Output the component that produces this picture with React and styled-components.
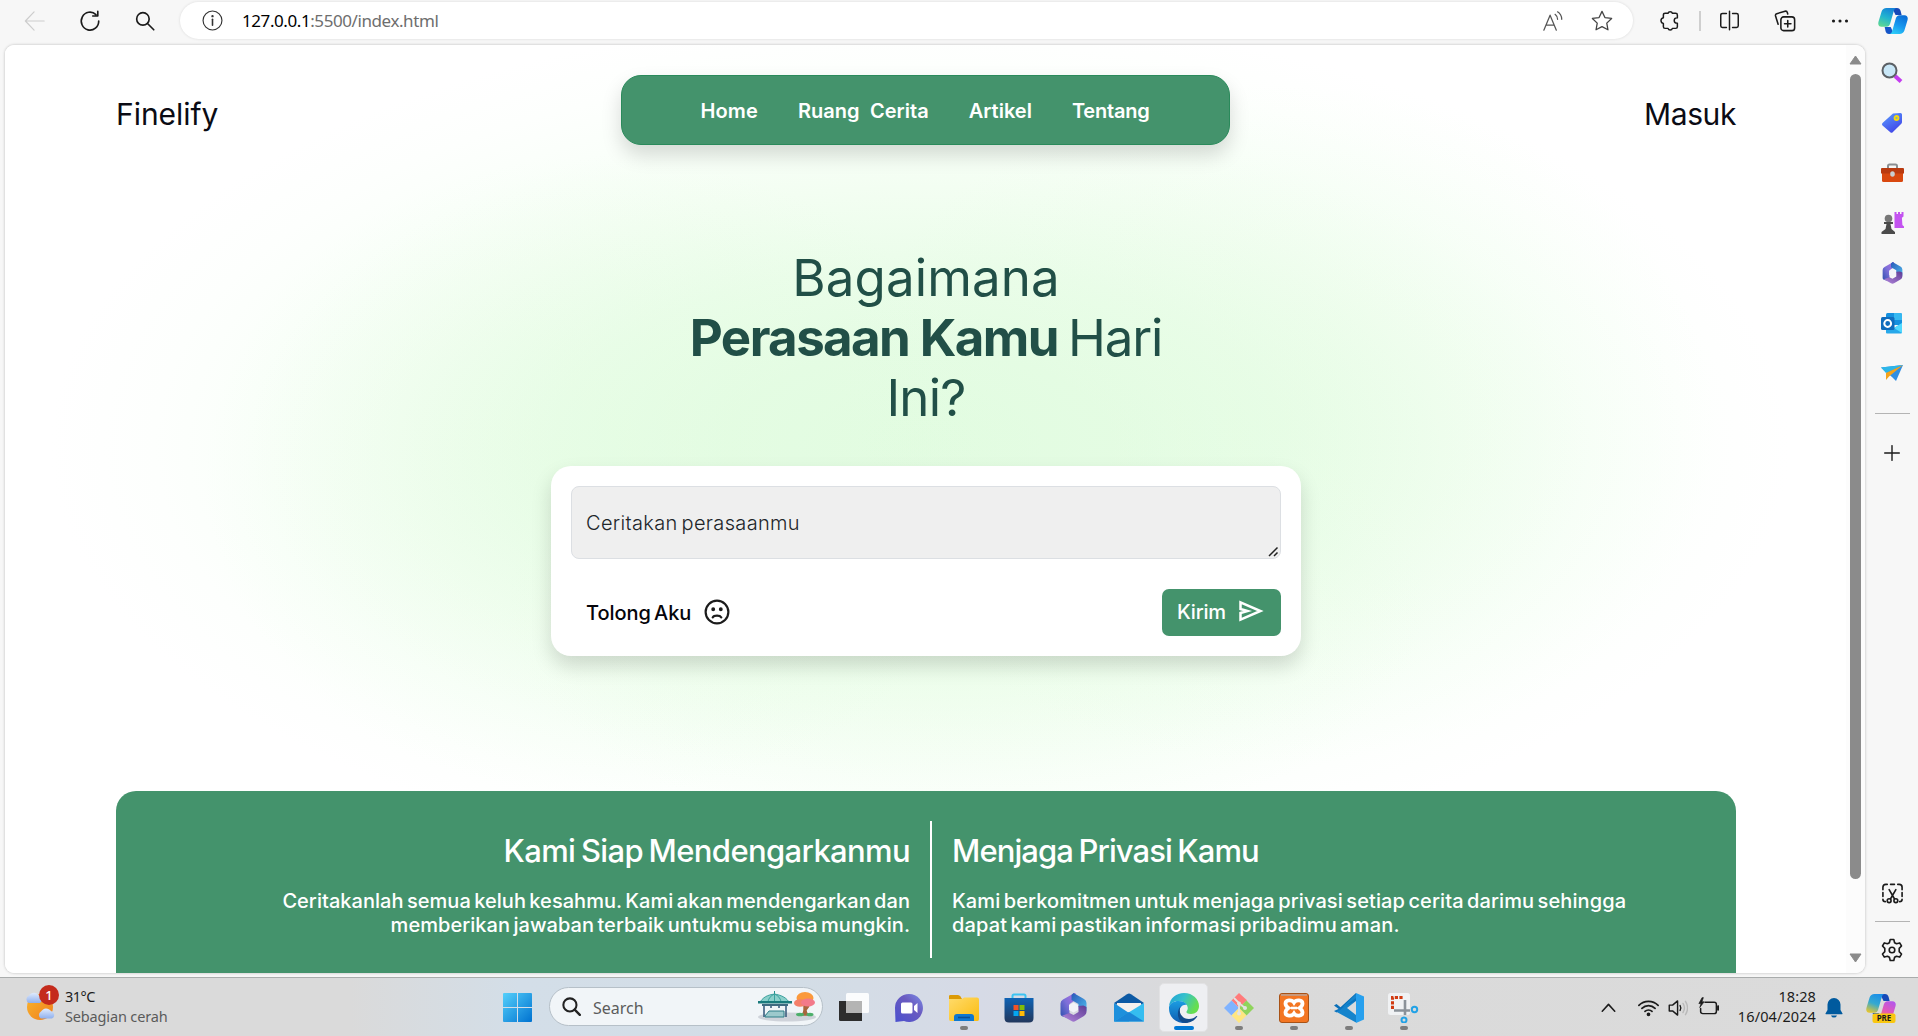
import React from "react";
import styled, { createGlobalStyle } from "styled-components";

const ui = '"Noto Sans", "Open Sans", sans-serif';
const brand = 'Inter, "Open Sans", sans-serif';

const Global = createGlobalStyle`
  * { box-sizing: border-box; }
  body { margin: 0; background: #f7f7f7; overflow: hidden; }
  svg { display: block; flex: none; }
`;

/* ---------- shell ---------- */
const Screen = styled.div`
  display: flex;
  flex-direction: column;
  width: 1918px;
  height: 1036px;
  background: #f7f7f7;
  overflow: hidden;
`;
const Toolbar = styled.header`
  display: flex;
  align-items: center;
  height: 45px;
  padding: 0 0 4px 7px;
  flex: none;
`;
const Slot = styled.div`
  width: ${(p) => p.$w || 55}px;
  display: flex;
  align-items: center;
  justify-content: center;
  flex: none;
`;
const AddressBar = styled.div`
  display: flex;
  align-items: center;
  width: 1453px;
  height: 37px;
  margin: 0 9px 0 8px;
  padding: 0 20px 0 22px;
  border-radius: 19px;
  background: #fff;
  box-shadow: 0 0 3px rgba(0, 0, 0, 0.12);
`;
const Url = styled.span`
  margin-left: 19px;
  flex: 1;
  font: 400 17px/24px ${ui};
  letter-spacing: -0.42px;
  color: #6e6e6e;
  b { font-weight: 400; color: #000; }
`;
const AddressIcons = styled.div`
  display: flex;
  gap: 28px;
  align-items: center;
`;
const ToolDivider = styled.div`
  width: 2px;
  height: 20px;
  margin: 0 0 0 3px;
  background: #cfcfcf;
`;
const Body = styled.div`
  display: flex;
  flex: none;
  height: 932px;
  padding-left: 5px;
`;
const Viewport = styled.main`
  display: flex;
  width: 1860px;
  height: 928px;
  border-radius: 9px;
  overflow: hidden;
  background: #fff;
  box-shadow: 0 0 3px rgba(0, 0, 0, 0.25);
`;
const Page = styled.div`
  width: 1841px;
  padding: 30px 110px 0 111px;
  overflow: hidden;
  background:
    radial-gradient(ellipse 400px 320px at 600px 430px, rgba(224, 252, 222, 0.45), rgba(240, 255, 240, 0) 100%),
    radial-gradient(ellipse 440px 340px at 1270px 380px, rgba(224, 252, 222, 0.4), rgba(240, 255, 240, 0) 100%),
    radial-gradient(ellipse 460px 240px at 960px 560px, rgba(228, 253, 226, 0.4), rgba(240, 255, 240, 0) 100%),
    radial-gradient(ellipse 870px 430px at 915px 400px,
      #e2fce1 0%, #e5fce4 22%, #ebfdea 42%, #f3fef2 60%, #fafffa 77%, #fdfffd 88%, #ffffff 100%);
`;
const ScrollTrack = styled.div`
  width: 19px;
  display: flex;
  flex-direction: column;
  align-items: center;
  padding: 10px 0;
  background: #fcfcfc;
`;
const ScrollThumb = styled.div`
  width: 11px;
  height: 805px;
  margin: 9px 0 auto;
  border-radius: 6px;
  background: #8b8b8b;
`;

/* ---------- site ---------- */
const SiteHeader = styled.div`
  display: flex;
  justify-content: space-between;
  height: 70px;
`;
const HeaderLink = styled.a`
  width: ${(p) => p.$w}px;
  text-align: ${(p) => p.$align};
  font: 400 30px/40px ${brand};
  letter-spacing: ${(p) => p.$ls}px;
  padding-top: 19px;
  color: #0b0b14;
`;
const Nav = styled.nav`
  width: 609px;
  height: 70px;
  display: flex;
  align-items: center;
  justify-content: center;
  gap: 40px;
  border-radius: 20px;
  background: #44936c;
  border: 1px solid #2a8a5b;
  box-shadow: 0 10px 20px rgba(0, 0, 0, 0.15);
`;
const NavLink = styled.a`
  font: 600 20px/24px ${brand};
  letter-spacing: ${(p) => p.$ls}px;
  padding-top: 2px;
  color: #fff;
  white-space: pre;
`;
const Question = styled.h1`
  width: 520px;
  margin: 103px auto 38px;
  text-align: center;
  font: 400 51px/60px ${brand};
  color: #214f47;
  b { font-weight: 700; letter-spacing: -1.6px; }
`;
const Phrase = styled.span`
  letter-spacing: ${(p) => p.$ls}px;
  word-spacing: -3px;
`;
const FeelingCard = styled.section`
  width: 750px;
  height: 190px;
  margin: 0 auto;
  padding: 20px;
  border-radius: 20px;
  background: #fff;
  box-shadow: 0 10px 20px rgba(0, 0, 0, 0.15);
`;
const FeelingField = styled.div`
  display: flex;
  align-items: flex-end;
  height: 73px;
  padding: 0 1px 1px 14px;
  border: 1px solid #dcdfe3;
  border-radius: 8px;
  background: #efefef;
`;
const FieldText = styled.span`
  flex: 1;
  align-self: center;
  padding-top: 1px;
  font: 300 20px/30px ${brand};
  letter-spacing: 0.33px;
  word-spacing: -2px;
  color: #212529;
`;
const CardActions = styled.div`
  display: flex;
  justify-content: space-between;
  align-items: center;
  height: 47px;
  margin-top: 30px;
  padding-left: 15px;
`;
const HelpLink = styled.a`
  display: flex;
  align-items: center;
  gap: 13px;
  font: 500 20px/28px ${brand};
  letter-spacing: -0.05px;
  word-spacing: -2px;
  color: #05050a;
  svg { margin-bottom: 2px; }
`;
const SendButton = styled.button`
  display: flex;
  align-items: center;
  justify-content: space-between;
  width: 119px;
  height: 47px;
  padding: 0 17px 2px 15px;
  border: 0;
  border-radius: 7px;
  background: #44936c;
  color: #fff;
  font: 500 20px/28px ${brand};
  letter-spacing: -0.2px;
  svg { margin-bottom: 1px; }
`;
const Promises = styled.section`
  display: flex;
  justify-content: center;
  height: 210px;
  margin-top: 135px;
  padding-top: 30px;
  border-radius: 20px 20px 0 0;
  background: #44936c;
`;
const Promise_ = styled.article`
  width: ${(p) => p.$w}px;
  height: 137px;
  padding: ${(p) => (p.$side === "right" ? "11px 20px 0 0" : "11px 0 0 20px")};
  text-align: ${(p) => p.$side};
  color: #fff;
  border-right: ${(p) => (p.$side === "right" ? "2px solid #fff" : "0")};
`;
const PromiseTitle = styled.h2`
  margin: 0 0 19px;
  font: 500 31px/38px ${brand};
  letter-spacing: ${(p) => p.$ls}px;
  word-spacing: -2px;
`;
const PromiseText = styled.p`
  margin: 0;
  font: 500 20px/24px ${brand};
  letter-spacing: ${(p) => p.$ls}px;
  word-spacing: -2px;
  white-space: nowrap;
`;

/* ---------- sidebar ---------- */
const Sidebar = styled.aside`
  display: flex;
  flex-direction: column;
  align-items: center;
  width: 53px;
  padding: 3px 0 0 1px;
`;
const SideSlot = styled.div`
  height: ${(p) => p.$h || 50}px;
  margin-top: ${(p) => (p.$push ? "auto" : 0)};
  display: flex;
  align-items: center;
  flex: none;
`;
const SideRule = styled.div`
  width: 35px;
  height: 1px;
  flex: none;
  background: #b4b4b4;
  margin-top: ${(p) => p.$top || 0}px;
`;

/* ---------- taskbar ---------- */
const Taskbar = styled.footer`
  display: flex;
  height: 59px;
  flex: none;
  border-top: 1px solid #a9acac;
  background: linear-gradient(90deg, #dadada 0, #dadada 350px, #d3dee8 520px, #d3dde6 800px, #d6dae6 980px, #dadada 1200px, #dbdbdb 100%);
`;
const Weather = styled.div`
  display: flex;
  width: 490px;
  padding: 8px 0 0 25px;
`;
const WeatherIcon = styled.div`
  position: relative;
  width: 40px;
`;
const Badge = styled.span`
  position: absolute;
  left: 14px;
  top: -1px;
  width: 20px;
  height: 20px;
  border-radius: 50%;
  background: #c42b1c;
  color: #fff;
  text-align: center;
  font: 500 13px/20px ${ui};
`;
const Stack = styled.div`
  display: flex;
  flex-direction: column;
  text-align: ${(p) => p.$align || "left"};
  font: 400 14.5px/20px ${ui};
  color: ${(p) => p.$color || "#5a5a5a"};
  letter-spacing: ${(p) => p.$ls || 0}px;
  b { font-weight: 400; color: #1c1c1c; letter-spacing: -0.5px; }
`;
const SearchPill = styled.div`
  display: flex;
  align-items: center;
  width: 274px;
  height: 39px;
  margin: 9px 3px 0 4px;
  padding: 0 5px 0 12px;
  border: 1px solid #b6c0c8;
  border-radius: 20px;
  background: #f1f5f8;
`;
const SearchLabel = styled.span`
  flex: 1;
  margin-left: 12px;
  padding-top: 2px;
  font: 400 16px/22px ${ui};
  letter-spacing: 0;
  color: #5c5c5c;
`;
const AppButton = styled.div`
  display: flex;
  flex-direction: column;
  align-items: center;
  justify-content: space-between;
  width: 49px;
  height: 49px;
  margin: 5px 3px 0;
  padding: 9px 0 1px;
  border-radius: 5px;
  border: 1px solid ${(p) => (p.$active ? "#e2e2e4" : "transparent")};
  background: ${(p) => (p.$active ? "#eeeff2" : "transparent")};
`;
const Running = styled.i`
  width: ${(p) => (p.$state === "active" ? 20 : 8)}px;
  height: 4px;
  border-radius: 2px;
  background: ${(p) => (p.$state === "active" ? "#0078d4" : p.$state ? "#7d7d7d" : "transparent")};
`;
const Tray = styled.div`
  display: flex;
  align-items: center;
  margin-left: auto;
  width: 324px;
  padding-top: 1px;
`;
const Clock = styled.div`
  flex: none;
  width: 82px;
  margin: 0 9px 4px 0;
`;

/* ---------- icons ---------- */
const Line = ({ size = 24, w = 1.6, color = "#1b1b1b", children, box = 24 }) => (
  <svg width={size} height={size} viewBox={`0 0 ${box} ${box}`} fill="none" stroke={color} strokeWidth={w} strokeLinecap="round" strokeLinejoin="round">{children}</svg>
);
const Gear = () => (
  <Line size={24} w={1.6}>
    <circle cx="12" cy="12" r="2.8" />
    <path d="M10.2 1.500h3.600l.8 3.200 1.900 1.100 3.200-.9 1.800 3.100-2.300 2.400v3.200l2.300 2.400-1.800 3.100-3.200-.9-1.900 1.100-.8 3.200h-3.600l-.8-3.200-1.900-1.100-3.200.9L2.500 16l2.300-2.400v-3.200L2.500 8l1.800-3.100 3.200.9 1.900-1.100z" />
  </Line>
);
const Copilot = ({ id, pre }) => (
  <svg width="30" height={pre ? 30 : 28} viewBox={pre ? "0 0 30 30" : "0 0 30 28"}>
    <defs>
      <linearGradient id={id + "a"} x1="0.6" y1="0" x2="0.2" y2="1">
        <stop offset="0" stopColor={pre ? "#1b8fe8" : "#1583d8"} /><stop offset=".5" stopColor={pre ? "#35a9d0" : "#22b5cf"} /><stop offset="1" stopColor={pre ? "#e8c62c" : "#5fd991"} />
      </linearGradient>
      <linearGradient id={id + "b"} x1="0.7" y1="0" x2="0.2" y2="1">
        <stop offset="0" stopColor={pre ? "#b657e8" : "#0a6fd8"} /><stop offset=".5" stopColor={pre ? "#e358b8" : "#1797ee"} /><stop offset="1" stopColor={pre ? "#f38a4a" : "#2fd0f8"} />
      </linearGradient>
    </defs>
    <path d="M14 1h5c2 0 3 1 3.600 3l1 4h-6z" fill="#1649b8" />
    <path d="M16 27h-5c-2 0-3-1-3.500-3l-.8-4h6z" fill="#1555c8" />
    <path d="M8.500 1H19c-1.800 0-2.700 1.200-3.200 3l-3.600 12.500c-.6 2-1.700 3.300-3.800 3.300H3.500C.8 19.800-.3 17.600.5 14.800L3.600 4.500C4.400 2.200 6 1 8.500 1z" fill={`url(#${id}a)`} />
    <path d="M21.500 27H11c1.800 0 2.700-1.200 3.200-3l3.600-12.500c.6-2 1.700-3.300 3.800-3.300h4.900c2.700 0 3.800 2.200 3 5L26.400 23.500c-.8 2.300-2.400 3.500-4.900 3.500z" fill={`url(#${id}b)`} />
    {pre && <rect x="6.500" y="20.500" width="23" height="9.500" rx="2" fill="#f9c710" />}
    {pre && <text x="18" y="28.200" textAnchor="middle" fontFamily="Noto Sans" fontWeight="700" fontSize="8" fill="#1a1a1a">PRE</text>}
  </svg>
);
const Hex = ({ id, w, h }) => (
  <svg width={w} height={h} viewBox="0 0 26 29">
    <defs>
      <linearGradient id={id + "a"} x1="1" y1="0" x2="0" y2="1"><stop offset="0" stopColor="#b06fe0" /><stop offset=".5" stopColor="#7c6fd8" /><stop offset="1" stopColor="#2c4fae" /></linearGradient>
      <linearGradient id={id + "b"} x1="0" y1="0" x2="1" y2="1"><stop offset="0" stopColor="#2858b8" /><stop offset="1" stopColor="#4fb9ec" /></linearGradient>
      <linearGradient id={id + "c"} x1="0" y1="1" x2="1" y2="0"><stop offset="0" stopColor="#b488de" /><stop offset="1" stopColor="#5e3c94" /></linearGradient>
    </defs>
    <path d="M14 0L2.500 6.500Q0 8 0 10.500V21q0 1.500 1.500 2.300L7 25c1.500-1 2-2 2-4V11l6-4V0z" fill={`url(#${id}a)`} />
    <path d="M13 0L23.500 6Q26 7.500 26 10v8l-8-4v-3L11 7V2z" fill={`url(#${id}b)`} />
    <path d="M26 14v5q0 2.500-2.500 4L15 28q-2 1.300-4 0l-9.500-5.200L9 20l4 2 5-3v-6l5-.5z" fill={`url(#${id}c)`} />
    <path d="M13 9.500l4.500 2.500v5L13 19.500 8.500 17v-5z" fill="#f2f3f8" />
  </svg>
);
const Outlook = () => (
  <svg width="22" height="21" viewBox="0 0 22 21">
    <rect x="5" width="16" height="12" rx="1.500" fill="#1490df" /><path d="M13 0h6.500Q21 0 21 1.500V7h-8z" fill="#35b8f1" />
    <path d="M21 10v9.500q0 1-1 1H6q-1 0-1-1V10l8 5z" fill="#28a8ea" /><path d="M13 15l8-5v10z" fill="#50d9ff" />
    <rect y="4" width="13.500" height="13" rx="1.500" fill="#0f6cbd" /><circle cx="6.700" cy="10.500" r="3.400" fill="none" stroke="#fff" strokeWidth="2" />
  </svg>
);

const apps = [
  { name: "taskview", icon: (
    <svg width="30" height="29" viewBox="0 0 30 29"><path d="M0 8h19l4 4v16H1.500Q0 28 0 26.500z" fill="#2d2d2d" /><rect x="7" y="0" width="23" height="20" rx="1.500" fill="#fff" opacity=".9" /><path d="M7 8h16v12H7z" fill="#b4b4b4" /></svg>
  ) },
  { name: "chat", icon: (
    <svg width="30" height="30" viewBox="0 0 30 30"><defs><linearGradient id="ch" x1="1" y1="0" x2="0" y2="1"><stop stopColor="#7b8ee8" /><stop offset=".4" stopColor="#6a5bc0" /><stop offset="1" stopColor="#4a50cf" /></linearGradient></defs><path d="M15 1a14 14 0 1 1-5 27.100L1.500 29 1 15A14 14 0 0 1 15 1z" fill="url(#ch)" /><rect x="7" y="9.500" width="11.500" height="11" rx="1.500" fill="#fff" /><path d="M20 13l3.500-3v10L20 17z" fill="#fff" /></svg>
  ) },
  { name: "explorer", run: "idle", icon: (
    <svg width="30" height="29" viewBox="0 0 30 29"><defs><linearGradient id="fo" x1="0" y1="0" x2="1" y2="1"><stop stopColor="#ffdb6b" /><stop offset="1" stopColor="#fbbc10" /></linearGradient></defs><path d="M0 3Q0 2 1.500 2H9q1.500 0 2.500 1.500L13 6H0z" fill="#dc9a05" /><path d="M0 6h13l2-1.500h13q2 0 2 2V26q0 2-1.500 2h-27Q0 28 0 26z" fill="url(#fo)" /><path d="M5 28v-4q0-3 3-3h14q3 0 3 3v4z" fill="#0f78d0" /><path d="M9 24.500h12" stroke="#0b4f94" strokeWidth="1.600" /></svg>
  ) },
  { name: "store", icon: (
    <svg width="30" height="30" viewBox="0 0 30 30"><defs><linearGradient id="st" x1="0" y1="0" x2="0" y2="1"><stop stopColor="#0f63b5" /><stop offset="1" stopColor="#22375c" /></linearGradient></defs><path d="M8.500 6V3Q8.500 1.500 10 1.500h10q1.500 0 1.500 1.500v3" fill="none" stroke="#3cc3f2" strokeWidth="2" /><path d="M.5 5h29v20q0 4.500-4.500 4.500H5Q.5 29.500.5 25z" fill="url(#st)" /><path d="M9.500 12h5v5h-5z" fill="#f35325" /><path d="M15.500 12h5v5h-5z" fill="#81bc06" /><path d="M9.500 18h5v5h-5z" fill="#05a6f0" /><path d="M15.500 18h5v5h-5z" fill="#ffba08" /></svg>
  ) },
  { name: "m365", icon: <Hex id="tb" w={27} h={29} /> },
  { name: "mail", icon: (
    <svg width="30" height="29" viewBox="0 0 30 29"><path d="M0 10L13 1.200q2-1.200 4 0L30 10 15 19z" fill="#0c59a4" /><path d="M3 10h24v4L15 20 3 14z" fill="#f3f0ee" /><path d="M0 10l15 10v8.500H0z" fill="#1e90dc" /><path d="M30 10L0 28.500h30z" fill="#35bdf0" /><path d="M0 28.500L15 19l15 9.500z" fill="#1b86d6" /></svg>
  ) },
  { name: "edge", run: "active", icon: (
    <svg width="30" height="30" viewBox="0 0 30 30"><defs><linearGradient id="e1" x1="0" y1="0" x2="1" y2=".4"><stop stopColor="#1f9fd6" /><stop offset=".5" stopColor="#35c1cc" /><stop offset="1" stopColor="#66de4f" /></linearGradient><linearGradient id="e2" x1="0" y1="0" x2="0" y2="1"><stop stopColor="#1b9de2" /><stop offset="1" stopColor="#0f5cb0" /></linearGradient></defs><path d="M0 13C1 5 7.500 0 15 0c9 0 15 6.500 15 13 0 5-3.500 8-8 8-3.500 0-5-1.300-4.500-2.500 1-1.300 1.400-2.500 1.200-4C18 9.500 13 8 9 8c-4 0-7 2-9 5z" fill="url(#e1)" /><path d="M0 14c1-3.500 4.500-6 9.500-6 4 0 7 1.500 8.500 4-4-1-7.500 2-7.500 6.500 0 6 5 9 9 11-9 2.500-19.500-3-19.500-14z" fill="url(#e2)" /><path d="M11.500 13.500C9 20 13 26 20 26c3 0 5.500-1.200 7.500-3 .5-.3 1 .1.700.6C25.500 28 21 30 16.500 30 8 29.500 7 18 11.500 13.500z" fill="#114a8b" /></svg>
  ) },
  { name: "git", run: "idle", icon: (
    <svg width="30" height="30" viewBox="0 0 30 30"><path d="M15 0l8 7.300L15 15 7.500 7.500z" fill="#ff7b7b" /><path d="M7.500 7.500L15 15l-7.500 7.500L0 15z" fill="#80b3ff" /><path d="M22.500 7.500L30 15l-7.500 7.500L15 15z" fill="#8fd45c" /><path d="M15 15l7.500 7.500L15 30l-7.500-7.500z" fill="#ffe680" /><path d="M10 5l5 5v10M16 11l5 4" stroke="#e3e3e3" strokeWidth="1.800" fill="none" /><circle cx="15" cy="10.500" r="2" fill="#e3e3e3" /><circle cx="21" cy="15" r="2" fill="#e3e3e3" /><circle cx="15" cy="20.500" r="2" fill="#e3e3e3" /></svg>
  ) },
  { name: "xampp", run: "idle", icon: (
    <svg width="30" height="30" viewBox="0 0 30 30"><rect x=".5" y=".5" width="29" height="29" rx="2.500" fill="#f37623" stroke="#a85216" /><path d="M2 1h26v2H2z" fill="#c9987a" /><path d="M15 9.500c-2-3-8.500-3-8.500 1 0 2 1.500 3.500 3 4.500-1.500 1-3 2.500-3 4.500 0 4 6.500 4 8.500 1 2 3 8.500 3 8.500-1 0-2-1.500-3.500-3-4.500 1.500-1 3-2.500 3-4.500 0-4-6.500-4-8.500-1z" fill="none" stroke="#fff" strokeWidth="3.800" /><path d="M12 15h6" stroke="#fff" strokeWidth="2.600" /></svg>
  ) },
  { name: "vscode", run: "idle", icon: (
    <svg width="30" height="30" viewBox="0 0 30 30"><path d="M22 0L6.500 14.200l-4-3.200L0 12.500 22 29z" fill="#0a6fb8" /><path d="M22 29.500L0 17.500 2.500 19l4-3L22 1z" fill="#1584cc" /><path d="M22 8L0 18l2.500 1.500L22 5z" fill="#0b74c0" /><path d="M22 8v14l-9-7z" fill="#d9dbdd" /><path d="M22 0l8 3.500v23L22 30z" fill="#27a0ee" /></svg>
  ) },
  { name: "snip", run: "idle", icon: (
    <svg width="31" height="30" viewBox="0 0 31 30"><rect width="22" height="22" rx="2.500" fill="#f0f2f4" /><path d="M4.500 16V4.500H16" fill="none" stroke="#d13b12" strokeWidth="3" strokeDasharray="3.200 1.400" /><path d="M17 7v15M6 17.500h16" stroke="#8b9299" strokeWidth="2.600" /><circle cx="26.500" cy="16.500" r="2.700" fill="none" stroke="#22a2e6" strokeWidth="2" /><circle cx="16" cy="27" r="2.500" fill="none" stroke="#22a2e6" strokeWidth="2" /></svg>
  ) },
];

const sideIcons = [
  <svg key="s" width="22" height="22" viewBox="0 0 22 22"><path d="M14 14l6 5.500" stroke="#c43cf0" strokeWidth="4" /><circle cx="8.500" cy="8.500" r="7" fill="#c9e7f7" stroke="#5c6065" strokeWidth="2" /></svg>,
  <svg key="t" width="22" height="22" viewBox="0 0 22 22"><defs><linearGradient id="tg" x1="0" y1="0" x2=".6" y2="1"><stop stopColor="#5aa0ff" /><stop offset="1" stopColor="#4146e8" /></linearGradient></defs><path d="M12 1.500L19.500 1q1.500 0 1.500 1.500V10q0 1-.7 1.700l-8.600 8.600q-1.200 1-2.400 0L1.500 13.500q-1.200-1.200 0-2.500z" fill="url(#tg)" /><circle cx="15.500" cy="6" r="2" fill="#7ea7b8" stroke="#f5d90a" strokeWidth="1.800" /></svg>,
  <svg key="b" width="23" height="20" viewBox="0 0 23 20"><path d="M7 5V3q0-1.500 1.500-1.500h6Q16 1.500 16 3v2" fill="none" stroke="#8b8f92" strokeWidth="2" /><path d="M1 9h21v8.500q0 1.500-1.500 1.500h-18Q1 19 1 17.500z" fill="#d9480f" /><path d="M0 6q0-1 1-1h21q1 0 1 1v4.500H0z" fill="#b93a10" /><ellipse cx="11.500" cy="11" rx="2.300" ry="2.800" fill="#c9ced1" /></svg>,
  <svg key="c" width="23" height="24" viewBox="0 0 23 24"><path d="M13.500 1h2v2h1.500V1h2v2h1.500V1h2v4.500l-1.600 1.300.5 7.200 1.600 1.500V17h-9.500z" fill="#c353f0" /><circle cx="7.500" cy="7.500" r="3.800" fill="#777" /><path d="M3 11h9v2H9.500l1 5 3.500 3v2H.5v-2l4-3 1-5H3z" fill="#4b4b4b" /></svg>,
  <Hex key="h" id="sb" w={21} h={22} />,
  <Outlook key="o" />,
  <svg key="d" width="22" height="17" viewBox="0 0 22 17"><path d="M0 2.500L22 0l-7 16-4-4z" fill="#2f8fe4" /><path d="M0 2.500L22 0 5 8z" fill="#2db6e8" /><path d="M22 0L5 8v7l3-3.500z" fill="#f5a31a" /></svg>,
];

const Gazebo = () => (
  <svg width="60" height="32" viewBox="0 0 60 32">
    <ellipse cx="30" cy="26" rx="29" ry="4.500" fill="#cfd3da" />
    <path d="M17.500 3V0" stroke="#1f8f8d" /><path d="M3 11c5-7 10-7 14.500-8C22 4 28 5 32 11z" stroke="#3aa09d" fill="#8bd0cb" /><path d="M11 10.500q1-5 6.500-7.500 5.500 2.500 6.500 7.500M17.500 3v8" stroke="#3aa09d" fill="none" /><path d="M1 10h34v2.500H1z" fill="#1a7a7c" />
    <path d="M7 13v13M14 13v4M22 13v4M29 13v13" stroke="#3d5f80" strokeWidth="1.600" /><path d="M8 25l4-5h15v6H8z" fill="#9cc9cc" stroke="#2f7f88" /><path d="M5 13h26v2H5z" fill="#3f6a80" />
    <path d="M47 13v6q0 3-2 5h6q-2-2-2-5l3-4" fill="#a8653c" stroke="#a8653c" strokeWidth="1.400" /><ellipse cx="48" cy="7" rx="8.500" ry="6" fill="#fb9a3c" /><ellipse cx="43" cy="12" rx="6" ry="3.800" fill="#f5806a" /><ellipse cx="51" cy="11.500" rx="7" ry="4" fill="#f27a8a" />
    <ellipse cx="43" cy="23.500" rx="4" ry="1.800" fill="#4caf6a" /><ellipse cx="53" cy="23.500" rx="3.500" ry="1.800" fill="#4caf6a" />
  </svg>
);

export default function App() {
  return (
    <Screen>
      <Global />
      <Toolbar>
        <Slot><Line size={22} color="#cdcdcd" w={1.3}><path d="M22 12H2M11 2L1.500 12 11 22" /></Line></Slot>
        <Slot><Line size={22} w={1.8}><path d="M21.500 12A9.500 9.800 0 1 1 18.500 5M20.500 1.500v5h-5.500" /></Line></Slot>
        <Slot><Line size={20} w={2}><circle cx="9.500" cy="9.500" r="7.500" /><path d="M15 15l7.500 7.500" /></Line></Slot>
        <AddressBar>
          <Line size={21} w={1.3} color="#333"><circle cx="12" cy="12" r="10.800" /><path d="M12 10.500v7" strokeWidth="1.800" /><circle cx="12" cy="7" r=".7" fill="#333" /></Line>
          <Url><b>127.0.0.1</b>:5500/index.html</Url>
          <AddressIcons>
            <Line size={20} w={1.500} color="#555"><path d="M1 23L8.500 5 16 23M4 17h9.500" /><path d="M14.500 4a8 8 0 0 1 3 6M17.500 1a11 11 0 0 1 5 9" /></Line>
            <Line size={22} w={1.400} color="#444"><path d="M12 1.500l3.200 6.700 7.300 1-5.300 5.100 1.300 7.300L12 18.100l-6.500 3.500 1.300-7.300L1.500 9.200l7.300-1z" /></Line>
          </AddressIcons>
        </AddressBar>
        <Slot $w={54}><Line size={21} w={1.700}><path d="M7 3.800h3.300a2.600 2.600 0 0 1 5 0H19q2 0 2 2V9h-.6a2.600 2.600 0 0 0 0 6h.6v4q0 2-2 2h-3.700a2.600 2.600 0 0 1-5 0H7q-2 0-2-2v-3.700a3.300 3.300 0 0 1 0-6.500V5.800q0-2 2-2z" /></Line></Slot>
        <ToolDivider />
        <Slot $w={56}><Line size={21} w={1.700}><path d="M12 1.500v21M8.500 4H4Q2 4 2 6v12q0 2 2 2h4.500M15.500 4H20q2 0 2 2v12q0 2-2 2h-4.500" /></Line></Slot>
        <Slot $w={56}><Line size={22} w={1.700}><rect x="7.500" y="7.500" width="15" height="15" rx="3" /><path d="M15 11.500v7M11.500 15h7M4.500 15.500L1.700 6.500Q1.200 4.500 3 4l9-2.700q2-.5 2.500 1.300l.5 1.700" /></Line></Slot>
        <Slot $w={54}><Line size={20} color="none"><g fill="#1b1b1b"><circle cx="4.200" cy="12" r="1.900" /><circle cx="12" cy="12" r="1.900" /><circle cx="19.800" cy="12" r="1.900" /></g></Line></Slot>
        <Slot $w={51}><Copilot id="cp" /></Slot>
      </Toolbar>

      <Body>
        <Viewport>
          <Page>
            <SiteHeader>
              <HeaderLink $w={198} $align="left" $ls={-0.05}>Finelify</HeaderLink>
              <Nav>
                <NavLink $ls={0.15}>Home</NavLink>
                <NavLink $ls={0.05}>Ruang{"\u00a0 "}Cerita</NavLink>
                <NavLink $ls={0}>Artikel</NavLink>
                <NavLink $ls={-0.2}>Tentang</NavLink>
              </Nav>
              <HeaderLink $w={200} $align="right" $ls={-0.4}>Masuk</HeaderLink>
            </SiteHeader>
            <Question>
              <Phrase $ls={0.1}>Bagaimana</Phrase><br />
              <b>Perasaan Kamu</b><Phrase $ls={-1.2}> Hari</Phrase><br />
              <Phrase $ls={-0.8}>Ini?</Phrase>
            </Question>
            <FeelingCard>
              <FeelingField>
                <FieldText>Ceritakan perasaanmu</FieldText>
                <svg width="11" height="11" viewBox="0 0 11 11"><path d="M1 10L9.500 1.500M6 10l3.500-3.500" stroke="#222" strokeWidth="1.500" /></svg>
              </FeelingField>
              <CardActions>
                <HelpLink>Tolong Aku
                  <Line size={26} w={2}><circle cx="12" cy="12" r="10.500" /><path d="M8 17c1.300-2.300 6.700-2.300 8 0" /><circle cx="8.500" cy="9.500" r=".8" fill="#111" /><circle cx="15.500" cy="9.500" r=".8" fill="#111" /></Line>
                </HelpLink>
                <SendButton>Kirim
                  <svg width="26" height="22" viewBox="0 0 26 22"><path d="M2.500 2.300L22.500 11 2.500 19.700V13l7-2-7-2z" fill="none" stroke="#fff" strokeWidth="2.500" /></svg>
                </SendButton>
              </CardActions>
            </FeelingCard>
            <Promises>
              <Promise_ $w={816} $side="right">
                <PromiseTitle $ls={-0.63}>Kami Siap Mendengarkanmu</PromiseTitle>
                <PromiseText $ls={0.04}>Ceritakanlah semua keluh kesahmu. Kami akan mendengarkan dan</PromiseText>
                <PromiseText $ls={0.05}>memberikan jawaban terbaik untukmu sebisa mungkin.</PromiseText>
              </Promise_>
              <Promise_ $w={804} $side="left">
                <PromiseTitle $ls={-0.9}>Menjaga Privasi Kamu</PromiseTitle>
                <PromiseText $ls={0.1}>Kami berkomitmen untuk menjaga privasi setiap cerita darimu sehingga</PromiseText>
                <PromiseText $ls={0.13}>dapat kami pastikan informasi pribadimu aman.</PromiseText>
              </Promise_>
            </Promises>
          </Page>
          <ScrollTrack>
            <svg width="13" height="10" viewBox="0 0 13 10"><path d="M6.500 1L12 9H1z" fill="#8b8b8b" stroke="#8b8b8b" strokeLinejoin="round" /></svg>
            <ScrollThumb />
            <svg width="13" height="10" viewBox="0 0 13 10"><path d="M6.500 9L12 1H1z" fill="#8b8b8b" stroke="#8b8b8b" strokeLinejoin="round" /></svg>
          </ScrollTrack>
        </Viewport>
        <Sidebar>
          {sideIcons.map((icon, i) => <SideSlot key={i}>{icon}</SideSlot>)}
          <SideRule $top={15} />
          <SideSlot $h={78}><Line size={16} w={2.100}><path d="M12 1v22M1 12h22" /></Line></SideSlot>
          <SideSlot $h={56} $push>
            <Line size={23} w={1.700}>
              <path d="M2 8V5.500Q2 2.500 5 2.500h1.500M10 2.500h4M17.500 2.500H19q3 0 3 3V8M2 11v4M22 11v4M2 18q0 2.500 2.500 2.500M22 18q0 2.500-2.500 2.500" /><path d="M8.500 8l5.500 9.500M15.500 8L10 17.500" /><circle cx="8.500" cy="19.500" r="2" /><circle cx="15.500" cy="19.500" r="2" />
            </Line>
          </SideSlot>
          <SideRule />
          <SideSlot $h={55}><Gear /></SideSlot>
        </Sidebar>
      </Body>

      <Taskbar>
        <Weather>
          <WeatherIcon>
            <svg width="32" height="36" viewBox="0 0 32 36"><defs><linearGradient id="sun" x1="0" y1="0" x2="1" y2="1"><stop stopColor="#f8b62e" /><stop offset="1" stopColor="#f07e1c" /></linearGradient><linearGradient id="cl" x1="0" y1="0" x2="0" y2="1"><stop stopColor="#dfeafc" /><stop offset="1" stopColor="#8fb0ee" /></linearGradient></defs><circle cx="15" cy="21" r="13" fill="url(#sun)" /><path d="M4 17a4 4 0 0 1 0-7.500 6 6 0 0 1 10 0A4 4 0 0 1 15 17z" fill="url(#cl)" /><path d="M16 32.500a4 4 0 0 1 0-7 6 6 0 0 1 10-.5 4 4 0 0 1 1 7.500z" fill="url(#cl)" /></svg>
            <Badge>1</Badge>
          </WeatherIcon>
          <Stack $ls={-0.15}><b>31°C</b><span>Sebagian cerah</span></Stack>
        </Weather>
        <Slot>
          <svg width="29" height="29" viewBox="0 0 29 29"><defs><linearGradient id="win" gradientUnits="userSpaceOnUse" x1="0" y1="0" x2="29" y2="29"><stop stopColor="#55d0fb" /><stop offset="1" stopColor="#0072d0" /></linearGradient></defs><path d="M1 0h13v14H0V1q0-1 1-1zM15 0h13q1 0 1 1v13H15zM0 15h14v14H1q-1 0-1-1zM15 15h14v13q0 1-1 1H15z" fill="url(#win)" /></svg>
        </Slot>
        <SearchPill>
          <Line size={19} w={2.600} color="#222"><circle cx="10" cy="10" r="8.300" /><path d="M16 16l6.500 6.500" strokeWidth="3" /></Line>
          <SearchLabel>Search</SearchLabel>
          <Gazebo />
        </SearchPill>
        {apps.map((a) => (
          <AppButton key={a.name} $active={a.run === "active"}>{a.icon}<Running $state={a.run} /></AppButton>
        ))}
        <Tray>
          <Slot $w={28}><Line size={15} w={2.500}><path d="M2 18L12 7l10 11" /></Line></Slot>
          <Slot $w={52}><Line size={21} w={1.900}><path d="M1 9.500a15.500 15.500 0 0 1 22 0M4.500 13a10.500 10.500 0 0 1 15 0M8 16.500a5.600 5.600 0 0 1 8 0" /><circle cx="12" cy="19.800" r="1.200" fill="#1b1b1b" /></Line></Slot>
          <Slot $w={8}><Line size={20} w={1.700}><path d="M1.500 8.500v7h4l6 5V3.500l-6 5zM14.500 9q1.800 3 0 6" /><path d="M18 6.500q3.500 5.500 0 11M21 4q5 8 0 16" stroke="#b9b9b9" /></Line></Slot>
          <Slot $w={52}><Line size={21} w={1.700}><path d="M8 6h10.500Q21 6 21 8.500v8q0 2.500-2.500 2.500h-13Q3 19 3 16.500V13" /><path d="M23 10.500v4" strokeWidth="2.400" /><path d="M4.500 1L1 7.500h2.500L2 12l5-6.500H4.500L6 1z" fill="#1b1b1b" strokeWidth=".8" /></Line></Slot>
          <Clock><Stack $align="right" $color="#1c1c1c" $ls={0.1}><span>18:28</span><span>16/04/2024</span></Stack></Clock>
          <svg width="18" height="20" viewBox="0 0 18 20"><path d="M9 0a6.500 6.500 0 0 1 6.500 6.500V12l2 3.500q.3.800-.5.800H1q-.8 0-.5-.8l2-3.500V6.500A6.500 6.500 0 0 1 9 0z" fill="#005a9e" /><path d="M6 17.500h6q-.5 2-3 2t-3-2z" fill="#005a9e" /></svg>
          <Slot $w={75}><Copilot id="pre" pre /></Slot>
        </Tray>
      </Taskbar>
    </Screen>
  );
}
